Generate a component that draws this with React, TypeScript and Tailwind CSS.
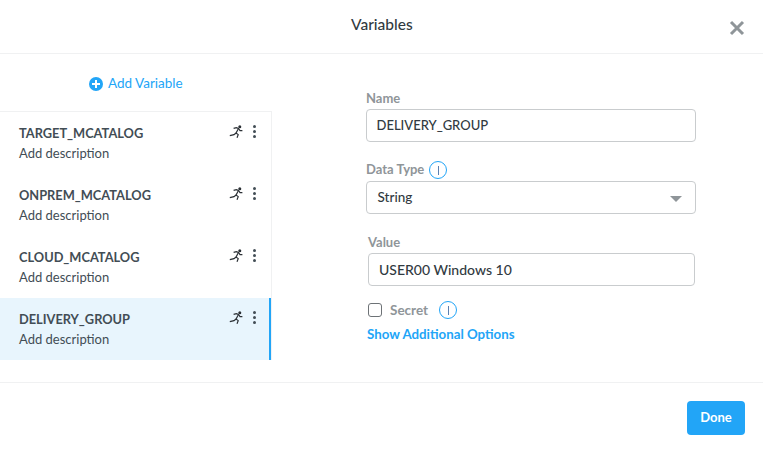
const variables = [
  { name: "TARGET_MCATALOG", active: false },
  { name: "ONPREM_MCATALOG", active: false },
  { name: "CLOUD_MCATALOG", active: false },
  { name: "DELIVERY_GROUP", active: true },
];

const InfoIcon = () => (
  <span className="flex h-[18px] w-[18px] items-center justify-center rounded-full border-[1.5px] border-[#22a5f7]">
    <span className="h-[9px] w-px bg-[#5b7fb0]" />
  </span>
);

const RunIcon = () => (
  <svg width="15" height="13" viewBox="0 0 15 13" fill="none" stroke="#2b3035" strokeWidth="1.2">
    <circle cx="10.8" cy="1.8" r="1.5" fill="#2b3035" stroke="none" />
    <path d="M9.5 3.5 L7 8 L5 9.7 L0.8 10.6" />
    <path d="M7 8 L9.2 9.6 L8 12.8" />
    <path d="M4.6 3.4 L7.4 2.6 L9.5 3.5 L11 5.6 L13.4 5.6" />
  </svg>
);

const App = () => {
  return (
    <div className="flex h-[450px] w-[763px] flex-col overflow-hidden bg-white font-['Lato','Open_Sans',sans-serif] text-[#424d55]">
      <header className="flex h-[54px] shrink-0 items-center justify-between border-b border-[#f0f1f2] pl-[351px] pr-[18px]">
        <h1 className="mb-[5px] text-[15.5px] font-medium leading-5 text-[#313a41]">Variables</h1>
        <svg width="16" height="16" viewBox="0 0 16 16" className="mt-[3px]">
          <path d="M2 2 L14 14 M14 2 L2 14" stroke="#8f9599" strokeWidth="3" />
        </svg>
      </header>

      <main className="flex h-[328px] shrink-0">
        <section className="flex w-[272px] shrink-0 flex-col">
          <button className="ml-[89px] mt-[20px] flex h-[19px] items-center gap-[5px] text-[13.5px] text-[#22a5f7]">
            <svg width="14" height="14" viewBox="0 0 14 14">
              <circle cx="7" cy="7" r="7" fill="#22a5f7" />
              <path d="M7 3 V11 M3 7 H11" stroke="#fff" strokeWidth="2" />
            </svg>
            Add Variable
          </button>
          <ul className="mt-[18px] border-r border-t border-[#f0f1f2]">
            {variables.map((v) => (
              <li
                key={v.name}
                className={`flex h-[62px] justify-between pl-[19px] pt-[12px] ${
                  v.active ? "border-r-2 border-[#22a5f7] bg-[#e8f5fd] pr-[13px]" : "pr-[15px]"
                }`}
              >
                <div>
                  <div className="text-[12.8px] font-bold leading-[18px] text-[#424d55]">{v.name}</div>
                  <div className="mt-[2px] text-[13px] leading-[18px] text-[#424d55]">Add description</div>
                </div>
                <div className="flex h-[14px] items-center gap-[9px]">
                  <RunIcon />
                  <span className="flex flex-col gap-[2px]">
                    <span className="h-[3px] w-[3px] rounded-full bg-[#424d55]" />
                    <span className="h-[3px] w-[3px] rounded-full bg-[#424d55]" />
                    <span className="h-[3px] w-[3px] rounded-full bg-[#424d55]" />
                  </span>
                </div>
              </li>
            ))}
          </ul>
        </section>

        <section className="flex flex-col pl-[94px] pt-[35px]">
          <label className="text-[13px] font-bold leading-[18px] text-[#8f9599]">Name</label>
          <div className="mt-[2px] flex h-[33px] w-[330px] items-center rounded-[4px] border border-[#c9ccce] pl-[9.5px] text-[13px] font-medium text-[#313a41]">
            DELIVERY_GROUP
          </div>
          <div className="mt-[19px] flex h-[18px] items-center gap-[5px]">
            <label className="text-[13px] font-bold text-[#8f9599]">Data Type</label>
            <InfoIcon />
          </div>
          <div className="mt-[2px] flex h-[33px] w-[330px] items-center justify-between rounded-[4px] border border-[#c9ccce] pl-[10.5px] pr-[13px] text-[13.5px] font-medium text-[#313a41]">
            String
            <span className="mt-[2px] h-0 w-0 border-x-[6px] border-t-[6px] border-x-transparent border-t-[#8f9599]" />
          </div>
          <label className="ml-[2px] mt-[19px] text-[13px] font-bold leading-[18px] text-[#8f9599]">Value</label>
          <div className="ml-[2px] mt-[2px] flex h-[33px] w-[327px] items-center rounded-[4px] border border-[#c9ccce] pl-[10px] text-[14px] font-medium text-[#313a41]">
            USER00 Windows 10
          </div>
          <div className="ml-[2px] mt-[15px] flex h-[18px] items-center">
            <span className="h-[14px] w-[14px] rounded-[3px] border border-[#6d7276] bg-white" />
            <label className="ml-[8px] text-[13.5px] font-bold text-[#8f9599]">Secret</label>
            <span className="ml-[11px]">
              <InfoIcon />
            </span>
          </div>
          <a className="ml-[1px] mt-[6px] text-[13.3px] font-bold leading-[18px] text-[#22a5f7]">
            Show Additional Options
          </a>
        </section>
      </main>

      <footer className="flex flex-1 items-start justify-end border-t border-[#f0f1f2] pr-[18px] pt-[18px]">
        <button className="flex h-[34px] w-[58px] items-center justify-center rounded-[4px] bg-[#22a5f7] text-[13px] font-bold text-white">
          Done
        </button>
      </footer>
    </div>
  );
};

export default App;
